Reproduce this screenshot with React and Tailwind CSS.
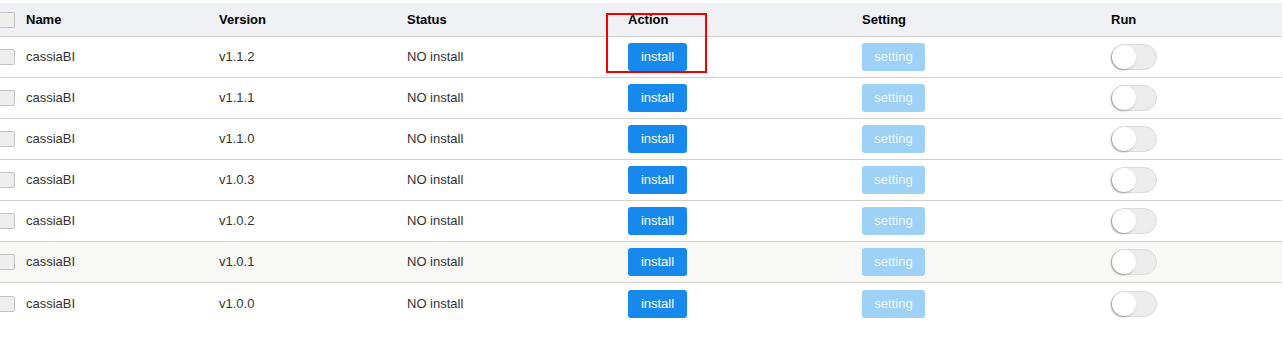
const versions = ['v1.1.2', 'v1.1.1', 'v1.1.0', 'v1.0.3', 'v1.0.2', 'v1.0.1', 'v1.0.0'];

const cols = 'grid grid-cols-[20px_193px_188px_221px_234px_249px_1fr]';

function Checkbox() {
  return (
    <div className="flex h-full items-center">
      <span className="-ml-[2px] block h-[16px] w-[17px] rounded-[2px] border border-[#c4c4c4] bg-[#eeeeee]" />
    </div>
  );
}

function Toggle() {
  return (
    <span className="relative block h-[26px] w-[46px] rounded-full border border-[#dcdcdc] bg-[#ececec]">
      <span className="absolute left-0 top-0 h-[24px] w-[24px] rounded-full bg-white shadow-[-1px_1px_2px_rgba(0,0,0,0.35)]" />
    </span>
  );
}

export default function App() {
  return (
    <div className="relative h-[348px] w-[1283px] bg-white pt-[3px] font-['Liberation_Sans',Arial,sans-serif] text-[13px]">
      <div className="w-[1282px]">
        {/* Header */}
        <div className={`${cols} h-[34px] border-b border-[#d3d0ca] bg-[#f0f1f5] font-bold text-black`}>
          <Checkbox />
          <div className="flex items-center pl-1.5">Name</div>
          <div className="flex items-center pl-1.5">Version</div>
          <div className="flex items-center pl-1.5">Status</div>
          <div className="flex items-center pl-1.5">Action</div>
          <div className="flex items-center pl-1.5">Setting</div>
          <div className="flex items-center pl-1.5">Run</div>
        </div>

        {/* Rows */}
        {versions.map((v, i) => (
          <div
            key={v}
            className={`${cols} h-[41px] text-[#333] ${i < versions.length - 1 ? 'border-b border-[#d3d0ca]' : ''} ${i === 5 ? 'bg-[#f8f8f6]' : ''}`}
          >
            <Checkbox />
            <div className="flex items-center pl-1.5">cassiaBI</div>
            <div className="flex items-center pl-1.5">{v}</div>
            <div className="flex items-center pl-1.5">NO install</div>
            <div className="flex items-center pl-1.5">
              <button className="h-[28px] w-[59px] rounded-[3px] bg-[#1889ec] text-[13px] text-white">install</button>
            </div>
            <div className="flex items-center pl-1.5">
              <button className="h-[28px] w-[63px] rounded-[3px] bg-[#9dd1f6] text-[13px] text-[#eef7fe]">setting</button>
            </div>
            <div className="flex items-center pl-1.5">
              <Toggle />
            </div>
          </div>
        ))}
      </div>

      {/* annotation box */}
      <div className="pointer-events-none absolute left-[606px] top-[13px] h-[60px] w-[101px] border-2 border-[#f00000]" />
    </div>
  );
}
